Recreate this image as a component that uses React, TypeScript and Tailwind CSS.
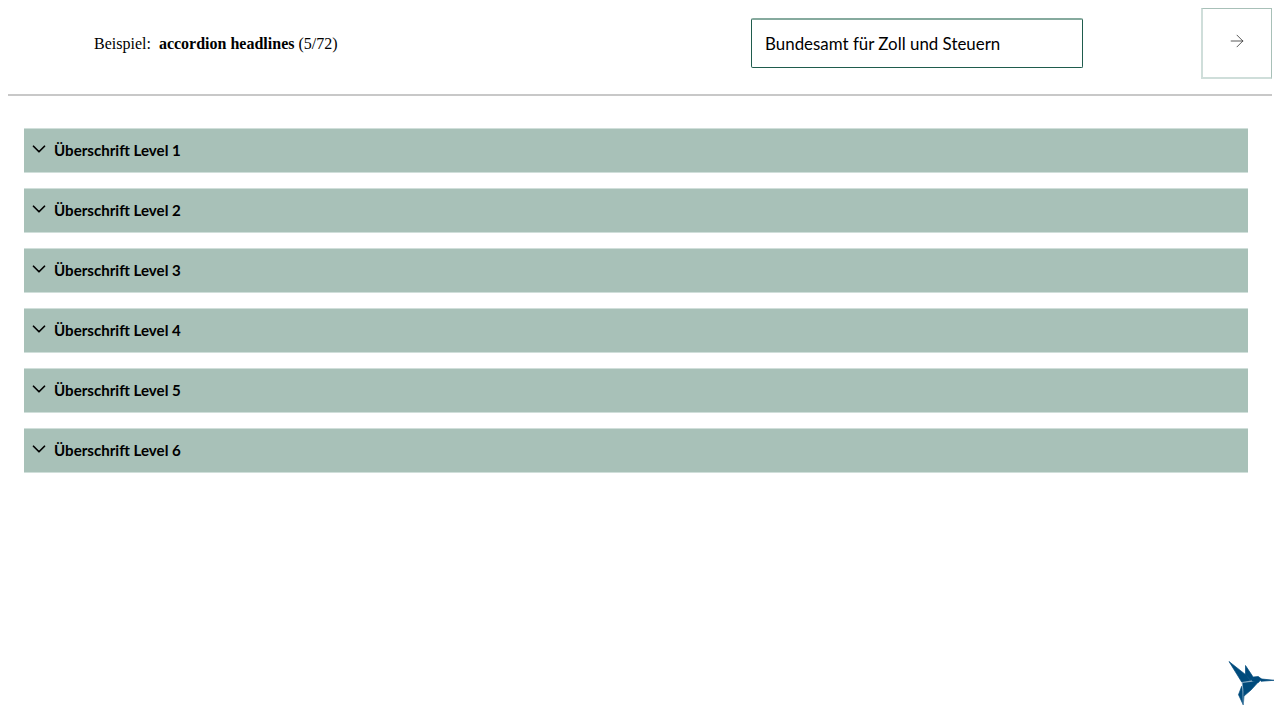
import { ArrowRight, ChevronDown } from "lucide-react";

const levels = [1, 2, 3, 4, 5, 6];

function Bird() {
  return (
    <svg viewBox="0 0 48 48" className="h-[48px] w-[48px]">
      <g fill="#004b7c" stroke="#004b7c" strokeWidth="0.7" strokeLinejoin="round">
        <polygon points="1,1.5 17.7,14.7 23,20.7 13.7,22" />
        <polygon points="17.5,5.5 25.3,17.3 23,20.7 17.5,14.7" />
        <polygon points="25.3,17 30.3,16.5 33.5,19 30.3,22.5 23,20.7" />
        <polygon points="32,18.8 46,20.3 33,21.3" />
        <polygon points="14.3,22.7 31,21.3 23,30 16.3,35.8" />
        <polygon points="13.7,26.3 16,35.3 15.3,45 10.5,34.7" />
      </g>
      <path d="M14.3 22.7 L15.3 45" stroke="#8fb0c8" strokeWidth="0.7" fill="none" />
      <path d="M14.3 22.7 L24 20.7" stroke="#8fb0c8" strokeWidth="0.7" fill="none" />
    </svg>
  );
}

export default function App() {
  return (
    <div className="relative h-[720px] w-[1280px] overflow-hidden bg-white text-black">
      <div className="px-2 pt-2">
        <div className="flex h-[71px] items-center">
          <p className="ml-[86px] pt-[1px] font-['Liberation_Serif',serif] text-base whitespace-pre">
            Beispiel:{"  "}<b>accordion headlines</b> (5/72)
          </p>
          <div className="ml-[413px] -mt-[1px] flex h-[50px] w-[332px] items-center rounded-[2px] border border-[#1f5c4d] border-t-2 border-t-[#86aa9e] pl-[13.5px] font-['Lato',sans-serif] text-[16.9px]">
            Bundesamt für Zoll und Steuern
          </div>
          <div className="ml-auto flex h-[71px] w-[71px] items-center justify-center border-t border-r border-b-2 border-l-2 border-t-[#a8c0b8] border-r-[#a8c0b8] border-b-[#cfdeda] border-l-[#cfdeda]">
            <ArrowRight size={20} strokeWidth={0.9} className="-mt-[5px] text-[#222]" />
          </div>
        </div>
        <hr className="mt-[15px] border-0 border-t-2 border-[#c8c8c8]" />
      </div>
      <div className="flex flex-col gap-[15px] pt-[32px] pl-6 pr-8">
        {levels.map((n) => (
          <div key={n} className="flex h-[45px] items-center border-y border-[#d0dfda] bg-[#a8c1b8] pl-[4px]">
            <ChevronDown size={22} strokeWidth={1.9} className="-mt-[3px]" />
            <span className="ml-[4px] font-['Lato',sans-serif] text-[15.1px] font-bold">
              Überschrift Level {n}
            </span>
          </div>
        ))}
      </div>
      <div className="absolute left-[1228px] top-[660px]">
        <Bird />
      </div>
    </div>
  );
}
